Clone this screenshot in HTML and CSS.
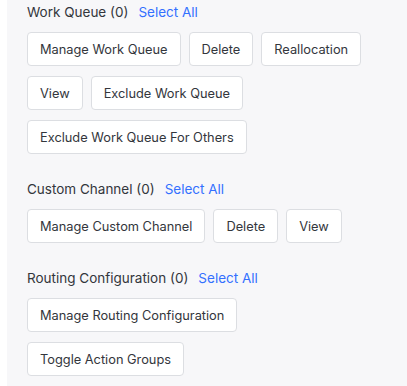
FILE: index.html
```html
<!DOCTYPE html>
<html lang="en">
<head>
  <meta charset="UTF-8">
  <meta name="viewport" content="width=device-width, initial-scale=1.0">
  <title>Permissions</title>
  <link rel="stylesheet" href="styles.css">
</head>
<body>

  <div class="panel">

    <div class="group">
      <div class="group-title">
        <span>Work Queue (0)</span>
        <a class="select-all" href="#">Select All</a>
      </div>
      <div class="actions">
        <button class="action">Manage Work Queue</button>
        <button class="action">Delete</button>
        <button class="action">Reallocation</button>
        <button class="action">View</button>
        <button class="action">Exclude Work Queue</button>
        <button class="action">Exclude Work Queue For Others</button>
      </div>
    </div>

    <div class="group">
      <div class="group-title">
        <span>Custom Channel (0)</span>
        <a class="select-all" href="#">Select All</a>
      </div>
      <div class="actions">
        <button class="action">Manage Custom Channel</button>
        <button class="action">Delete</button>
        <button class="action">View</button>
      </div>
    </div>

    <div class="group">
      <div class="group-title">
        <span>Routing Configuration (0)</span>
        <a class="select-all" href="#">Select All</a>
      </div>
      <div class="actions">
        <button class="action">Manage Routing Configuration</button>
        <button class="action">Toggle Action Groups</button>
      </div>
    </div>

  </div>

</body>
</html>
```

FILE: styles.css
```css
body {
  margin: 0;
  font-family: 'Inter', 'Noto Sans', sans-serif;
  background: #ffffff;
  height: 100vh;
  overflow: hidden;
}

.panel {
  margin-left: 7px;
  height: 100%;
  background: #f7f7f9;
  padding: 1px 20px 0 20px;
  box-sizing: border-box;
}

.group {
  margin-bottom: 24px;
}

.group-title {
  font-size: 13.5px;
  line-height: 22px;
  color: #33363c;
  display: flex;
  gap: 10px;
  margin-bottom: 9px;
}

.select-all {
  color: #3370ff;
  text-decoration: none;
}

.actions {
  display: flex;
  flex-wrap: wrap;
  gap: 10px 8px;
  width: 345px; /* wraps rows like the original */
}

.action {
  height: 34px;
  padding: 0 12px;
  background: #fff;
  border: 1px solid #dcdee2;
  border-radius: 4px;
  font-family: inherit;
  font-size: 12.8px;
  color: #33363c;
  cursor: pointer;
}

.action:hover {
  border-color: #3370ff;
  color: #3370ff;
}
```
